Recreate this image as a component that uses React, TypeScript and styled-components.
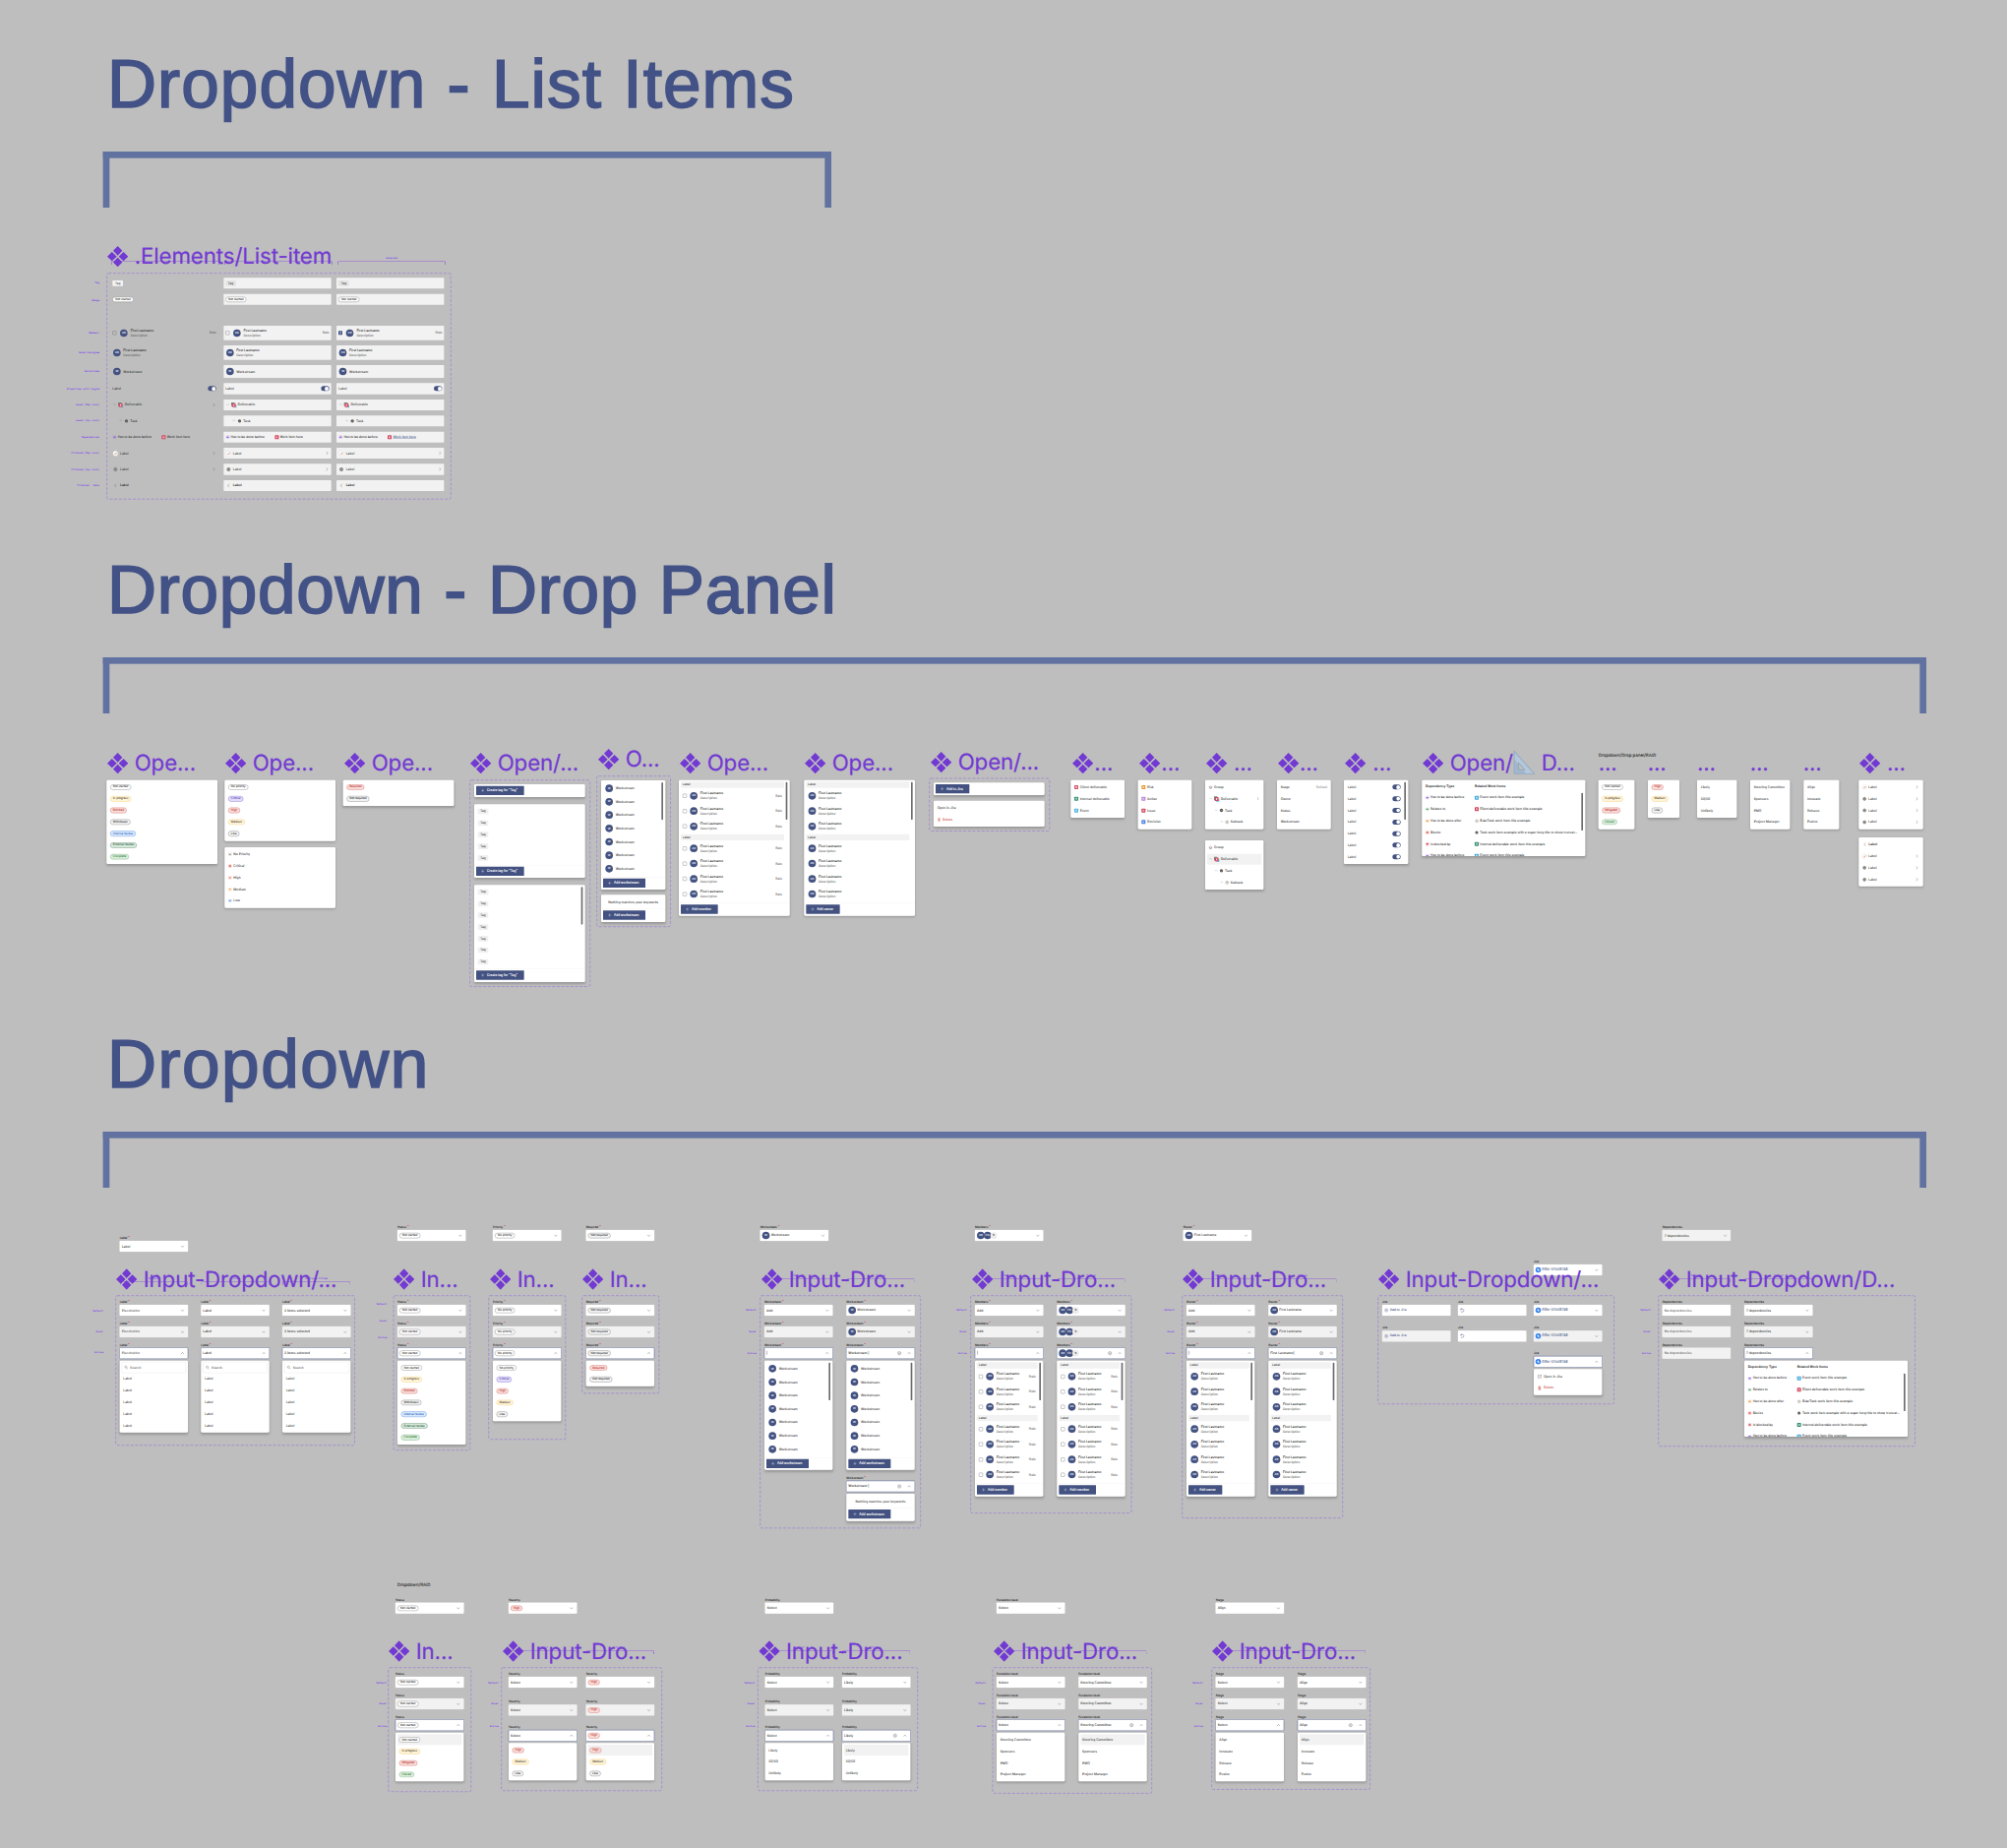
import React from "react";
import styled, { createGlobalStyle, css } from "styled-components";

/* The board is authored in canvas units and shown at one third zoom. */
const ZOOM = 1 / 3;

const color = {
  canvas: "#bebebe",
  heading: "#435286",
  bracket: "#6172a0",
  purple: "#7239d3",
  line: "#8f5fdc",
  dash: "rgba(142, 98, 226, 0.6)",
  navy: "#435281",
  text: "#343434",
  muted: "#606060",
  soft: "#f2f2f2",
  red: "#c83a32",
};

const Global = createGlobalStyle`
  html, body { margin: 0; background: ${color.canvas}; }
  body { overflow: hidden; }
  * { box-sizing: border-box; }
`;

const Viewport = styled.main`
  width: 2040px;
  height: 1878px;
  overflow: hidden;
  background: ${color.canvas};
`;

const Canvas = styled.div`
  position: relative;
  width: 6120px;
  height: 5634px;
  transform: scale(${ZOOM});
  transform-origin: 0 0;
  font-family: Inter, "Liberation Sans", sans-serif;
  font-size: 10px;
  line-height: 1;
  color: ${color.text};
  white-space: nowrap;
  text-rendering: geometricPrecision;
  -webkit-text-stroke: 0.15px currentColor;
`;

const Node = styled.div<{ $x: number; $y: number; $w?: number; $h?: number }>`
  position: absolute;
  left: ${(p) => p.$x}px;
  top: ${(p) => p.$y}px;
  ${(p) => p.$w !== undefined && `width: ${p.$w}px;`}
  ${(p) => p.$h !== undefined && `height: ${p.$h}px;`}
`;

/* ---------- headings ---------- */

const Heading = styled.h1<{ $track: number; $word: number }>`
  margin: 0;
  font-family: "Liberation Sans", Arial, sans-serif;
  font-weight: 400;
  font-size: 208px;
  line-height: 240px;
  letter-spacing: ${(p) => p.$track}px;
  word-spacing: ${(p) => p.$word}px;
  color: ${color.heading};
  -webkit-text-stroke: 5px ${color.heading};
`;

const BigBracket = styled.div`
  height: 171px;
  border: 20px solid ${color.bracket};
  border-bottom: 0;
`;

/* ---------- component titles ---------- */

const TitleRow = styled.div<{ $gap: number }>`
  display: flex;
  align-items: center;
  height: 80px;
  gap: ${(p) => p.$gap}px;
  color: ${color.purple};
`;

const TitleText = styled.span`
  display: flex;
  font-size: 67px;
  line-height: 80px;
  font-weight: 400;
  letter-spacing: -0.4px;
  white-space: pre;
  -webkit-text-stroke: 0.6px currentColor;
`;

const DiamondIcon = () => (
  <svg width="64" height="64" viewBox="0 0 64 64" fill="currentColor">
    <path d="M32 0 46 14.4 32 29 18 14.4zM32 35 46 49.6 32 64 18 49.6zM14.4 18 29 32 14.4 46 0 32zM49.6 18 64 32 49.6 46 35 32z" />
  </svg>
);

const RulerIcon = () => (
  <svg width="68" height="76" viewBox="0 0 68 76">
    <path d="M3 2v70h62z" fill="#a3b8cf" stroke="#8ba4c0" strokeWidth="2" />
    <path d="M5 8v20l34 43h22z" fill="#b9cbdd" opacity=".8" />
    <path d="M16 38v22h20z" fill="#bebebe" stroke="#8299b4" strokeWidth="2" />
  </svg>
);

function Title({ x, y, text, gap = 19, icon = true }: { x: number; y: number; text: React.ReactNode; gap?: number; icon?: boolean }) {
  return (
    <Node $x={x} $y={y - 40}>
      <TitleRow $gap={gap}>
        {icon && <DiamondIcon />}
        <TitleText>{text}</TitleText>
      </TitleRow>
    </Node>
  );
}

/* ---------- purple annotations ---------- */

const NoteText = styled.span`
  display: block;
  font-family: "Liberation Mono", monospace;
  font-size: 7.5px;
  line-height: 10px;
  text-align: right;
  color: #7c3cee;
`;

function SideNotes({ right, ys, names = ["Default", "Hover", "Active"] }: { right: number; ys: number[]; names?: string[] }) {
  return (
    <>
      {ys.map((y, i) => (
        <Node key={y} $x={right - 120} $y={y - 5} $w={120}>
          <NoteText>{names[i]}</NoteText>
        </Node>
      ))}
    </>
  );
}

const SpanLine = styled.div`
  height: 12px;
  border: 2.6px solid ${color.line};
  border-bottom: 0;
  border-radius: 4px 4px 0 0;
`;

const SpanNote = styled(NoteText)`
  height: 10px;
  text-align: center;
  margin-bottom: 3px;
`;

function Span({ x, y, w, name }: { x: number; y: number; w: number; name: string }) {
  return (
    <Node $x={x} $y={y - 13} $w={w}>
      <SpanNote>{name}</SpanNote>
      <SpanLine />
    </Node>
  );
}

const DashedFrame = styled(Node)<{ $pad: string; $gap?: number }>`
  display: flex;
  align-items: flex-start;
  gap: ${(p) => p.$gap ?? 0}px;
  padding: ${(p) => p.$pad};
`;

const Dash = styled.svg`
  position: absolute;
  inset: 0;
  width: 100%;
  height: 100%;
  overflow: visible;
  pointer-events: none;
`;

const DashOutline = () => (
  <Dash>
    <rect x="1" y="1" width="99.8%" height="99.8%" rx="5" fill="none" stroke={color.dash} strokeWidth="2.4" strokeDasharray="9 5" />
  </Dash>
);

const Stack = styled.div<{ $gap?: number }>`
  display: flex;
  flex-direction: column;
  gap: ${(p) => p.$gap ?? 0}px;
`;

/* ---------- icons ---------- */

type IconName =
  | "chevDown" | "chevUp" | "chevRight" | "chevLeft" | "plus" | "search" | "clear" | "trash"
  | "branch" | "stack" | "task" | "subtask" | "group" | "globe" | "brand" | "jira" | "add" | "loader" | "external";

const iconPaths: Record<IconName, React.ReactNode> = {
  chevDown: <path d="M2.5 5l4.5 5 4.5-5" />,
  chevUp: <path d="M2.5 9.5l4.5-5 4.5 5" />,
  chevRight: <path d="M5 2l4 5-4 5" />,
  chevLeft: <path d="M9 2L5 7l4 5" />,
  plus: <path d="M7 1.5v11M1.5 7h11" />,
  search: <><circle cx="5.5" cy="5.5" r="3.8" /><path d="M8.5 8.5L13 13" /></>,
  clear: <><circle cx="7" cy="7" r="5.2" /><path d="M5 5l4 4M9 5L5 9" /></>,
  trash: <path d="M3 3.5h8M5.5 3V1.5h3V3M4 4v9h6V4M6 6v5M8 6v5" />,
  branch: <path d="M3 5.5h6.5c2 0 2 3 2 3" opacity=".6" />,
  stack: (
    <g stroke="none">
      <path d="M0 0h9v3H3v7H0z" fill="#4d9c86" />
      <path d="M6 13h5V6h4v9H6z" fill="#6dbce0" />
      <path d="M2 2h10.5v11H2z" fill="#dc4460" />
      <path d="M5.5 5h3.5v5H5.500z" fill="#f7ccd3" />
    </g>
  ),
  task: <><circle cx="7" cy="7" r="5.4" fill="#505050" stroke="none" /><path d="M4.6 7.2l1.8 1.8 3.2-3.6" stroke="#e6e6e6" /></>,
  subtask: <><circle cx="7" cy="7" r="4.6" /><path d="M7 4v3.400h2.400" /></>,
  group: <path d="M1.500 7L7 4l5.500 3L7 10zM4 9v2.200h6V9" />,
  globe: <><circle cx="7" cy="7" r="5" fill="#b4b4b4" stroke="#5c5c5c" /><path d="M2 7h10M7 2v10" stroke="#5c5c5c" /></>,
  brand: <><circle cx="7" cy="7" r="7.600" fill="#fdfdfd" stroke="#cfcfcf" strokeWidth=".8" /><path d="M3 8.500l3 2 4.500-6" stroke="#e98c5a" strokeWidth="1.600" /><path d="M8 9l3-4" stroke="#8f4a3a" /></>,
  jira: <><circle cx="7" cy="7" r="7.600" fill="#2f7ff0" stroke="none" /><path d="M3 6.800L7 3v4.200zM7.200 7.200L11 7l-3.800 4z" fill="#fff" stroke="#fff" strokeWidth=".8" /></>,
  add: <><circle cx="7" cy="7" r="5.200" /><path d="M7 4.200v5.600M4.200 7h5.600" /></>,
  loader: <path d="M2 2.500h3.500M2.500 2v4M2.800 4.600A4.800 4.800 0 1 1 2.600 9.400" />,
  external: <path d="M7 2.500H2.500v9h9V7M8.500 2h4v4M12 2.500L7 7.500" />,
};

function Icon({ name, size = 14, tone = "#666", weight = 1.3 }: { name: IconName; size?: number; tone?: string; weight?: number }) {
  return (
    <svg width={size} height={size} viewBox="0 0 14 14" fill="none" stroke={tone} strokeWidth={weight} overflow="visible">
      {iconPaths[name]}
    </svg>
  );
}

const Square = styled.span<{ $c: string }>`
  display: flex;
  align-items: center;
  justify-content: center;
  flex: none;
  width: 12px;
  height: 12px;
  border-radius: 2px;
  background: ${(p) => p.$c};
  &::after {
    content: "";
    width: 45%;
    height: 50%;
    background: rgba(255, 255, 255, 0.55);
  }
`;

const Glyph = styled.span<{ $c: string }>`
  display: flex;
  align-items: center;
  justify-content: center;
  flex: none;
  width: 11px;
  height: 11px;
  border-radius: 2px;
  background: ${(p) => p.$c}2e;
  &::after {
    content: "";
    width: 7px;
    height: 4px;
    background: ${(p) => p.$c};
    opacity: 0.85;
  }
`;

/* ---------- atoms ---------- */

type Tone = "plain" | "amber" | "red" | "blue" | "green" | "teal" | "violet" | "grey";

const tones: Record<Tone, [string, string, string]> = {
  plain: ["#ffffff", "#686868", "#2c2c2c"],
  grey: ["#f3f3f3", "#686868", "#2c2c2c"],
  amber: ["#fff4d8", "#f2c65c", "#3f3828"],
  red: ["#f8dcd9", "#cb554c", "#b92c24"],
  blue: ["#d9e8fb", "#3b7edb", "#1f63c6"],
  green: ["#daeedb", "#5f9f64", "#2d7735"],
  teal: ["#d8e8dc", "#407553", "#265b3a"],
  violet: ["#e2dbf8", "#6f59ca", "#4f36b0"],
};

const PillBox = styled.span<{ $tone: Tone }>`
  display: inline-flex;
  align-items: center;
  height: 16.5px;
  padding: 0 7.5px;
  border-radius: 8.5px;
  border: 1.7px solid ${(p) => tones[p.$tone][1]};
  background: ${(p) => tones[p.$tone][0]};
  color: ${(p) => tones[p.$tone][2]};
  font-size: 8.8px;
`;

const badgeTone: Record<string, Tone> = {
  "Not started": "plain", "In progress": "amber", Blocked: "red", Withdrawn: "grey", "Internal review": "blue",
  "External review": "teal", Complete: "green", "No priority": "plain", Critical: "violet", High: "red",
  Medium: "amber", Low: "grey", Required: "red", "Not required": "grey", Mitigated: "red", Closed: "green",
};

const Pill = ({ name }: { name: string }) => <PillBox $tone={badgeTone[name]}>{name}</PillBox>;

const Chip = styled.span<{ $bg?: string }>`
  display: inline-flex;
  align-items: center;
  height: 17px;
  padding: 0 8px;
  border-radius: 2px;
  background: ${(p) => p.$bg ?? "#f0f0f0"};
  font-size: 9.2px;
`;

const Avatar = styled.span<{ $ghost?: boolean }>`
  display: inline-flex;
  align-items: center;
  justify-content: center;
  flex: none;
  width: 23px;
  height: 23px;
  border-radius: 50%;
  font-size: 8.6px;
  font-weight: 500;
  color: #e6e9f2;
  background: ${color.navy};
  ${(p) => p.$ghost && css`
    width: 20px;
    height: 20px;
    background: #ececec;
    color: ${color.text};
  `}
`;

const AvatarGroup = styled.span`
  display: flex;
  align-items: center;
  & > * + * { margin-left: -2.5px; }
`;

const Check = styled.span<{ $on?: boolean }>`
  flex: none;
  width: 12px;
  height: 12px;
  margin-right: 2px;
  border: 1.8px solid #5e5e5e;
  border-radius: 2px;
  ${(p) => p.$on && css`
    border: 3px solid ${color.navy};
    background: #8793b5;
  `}
`;

const ToggleTrack = styled.span`
  display: flex;
  justify-content: flex-end;
  align-items: center;
  margin-left: auto;
  width: 25px;
  height: 15px;
  padding: 1.6px;
  border-radius: 8px;
  background: ${color.navy};
  &::after {
    content: "";
    width: 11.6px;
    height: 11.6px;
    border-radius: 50%;
    background: #fff;
  }
`;

const Right = styled.span<{ $muted?: boolean }>`
  display: flex;
  margin-left: auto;
  color: ${(p) => (p.$muted ? "#8e8e8e" : color.muted)};
`;

const Txt = styled.span<{ $c?: string; $b?: boolean; $u?: boolean; $w?: number }>`
  color: ${(p) => p.$c ?? "inherit"};
  font-weight: ${(p) => (p.$b ? 600 : 400)};
  text-decoration: ${(p) => (p.$u ? "underline" : "none")};
  ${(p) => p.$w !== undefined && `width: ${p.$w}px;`}
`;

const Person = styled.span`
  display: flex;
  flex-direction: column;
  gap: 6px;
  & > :first-child { font-weight: 500; color: #2b2b2b; }
  & > :last-child { font-size: 9.6px; color: ${color.muted}; }
`;

const PersonText = () => (
  <Person>
    <span>First Lastname</span>
    <span>Description</span>
  </Person>
);

const Button = styled.button`
  display: inline-flex;
  align-items: center;
  gap: 7px;
  height: 28px;
  padding: 0 20px 0 14px;
  border: 0;
  border-radius: 1px;
  background: ${color.navy};
  color: #fff;
  font: 500 9.7px Inter, sans-serif;
  line-height: 1;
`;

const AddButton = ({ text }: { text: string }) => (
  <Button>
    <Icon name="plus" size={12} tone="#dfe3ee" />
    {text}
  </Button>
);

/* ---------- panels ---------- */

const PanelBox = styled.div<{ $w?: number; $h: number }>`
  position: relative;
  display: flex;
  flex-direction: column;
  overflow: hidden;
  padding-top: 4.2px;
  width: ${(p) => p.$w ?? 208}px;
  height: ${(p) => p.$h}px;
  border-radius: 4px;
  background: #fff;
`;

const Shadow = styled.div`
  width: fit-content;
  border-radius: 4px;
  box-shadow: 0 4px 8px rgba(0, 0, 0, 0.2);
`;

const Scroll = styled.i<{ $top?: number }>`
  position: absolute;
  top: ${(p) => p.$top ?? 6}px;
  right: 7px;
  width: 5px;
  height: 115px;
  border-radius: 3px;
  background: #6c6c6c;
`;

function Panel({ w, h, scroll, scrollTop, children }: { w?: number; h: number; scroll?: boolean; scrollTop?: number; children: React.ReactNode }) {
  return (
    <Shadow>
      <PanelBox $w={w} $h={h}>
        {children}
        {scroll && <Scroll $top={scrollTop} />}
      </PanelBox>
    </Shadow>
  );
}

const Row = styled.div<{ $h?: number; $indent?: number; $gap?: number; $right?: number; $hot?: boolean }>`
  display: flex;
  align-items: center;
  flex: none;
  height: ${(p) => p.$h ?? 35.4}px;
  gap: ${(p) => p.$gap ?? 4}px;
  padding-left: ${(p) => p.$indent ?? 11}px;
  padding-right: ${(p) => p.$right ?? 11}px;
  ${(p) => p.$hot && css`
    background: linear-gradient(${color.soft}, ${color.soft}) 6px 1px / calc(100% - 12px) 33px no-repeat;
  `}
`;

const Footer = styled.div<{ $mt?: number }>`
  display: flex;
  margin-top: ${(p) => p.$mt ?? 4}px;
  padding: 4px 6px;
  border-top: 1.5px solid #efefef;
`;

const GroupLabel = styled.div`
  display: flex;
  align-items: center;
  flex: none;
  height: 19px;
  margin: 1px 17px 1px 6px;
  padding-left: 5px;
  border-radius: 2px;
  background: ${color.soft};
  font-size: 9.4px;
`;

const MessageRow = styled(Row)`
  justify-content: center;
`;

const pills = (names: string[], hot = -1) =>
  names.map((n, i) => (
    <Row key={n} $hot={i === hot}>
      <Pill name={n} />
    </Row>
  ));

const texts = (names: string[], hot = -1) =>
  names.map((n, i) => (
    <Row key={n + i} $hot={i === hot}>
      <span>{n}</span>
    </Row>
  ));

const times = (n: number, render: (i: number) => React.ReactNode) =>
  Array.from({ length: n }, (_, i) => <React.Fragment key={i}>{render(i)}</React.Fragment>);

const tagRows = (n: number) => times(n, () => <Row><Chip>Tag</Chip></Row>);

const WorkstreamPanel = ({ w }: { w?: number }) => (
  <Panel w={w} h={333} scroll>
    {times(7, () => (
      <Row $h={40.9} $indent={13} $gap={8}>
        <Avatar>W</Avatar>
        <span>Workstream</span>
      </Row>
    ))}
    <Footer><AddButton text="Add workstream" /></Footer>
  </Panel>
);

const EmptyPanel = ({ w }: { w?: number }) => (
  <Panel w={w} h={83}>
    <MessageRow $h={39.5}>Nothing matches your keywords</MessageRow>
    <Footer $mt={0}><AddButton text="Add workstream" /></Footer>
  </Panel>
);

function PeoplePanel({ w, select, action }: { w?: number; select?: boolean; action: string }) {
  const person = () => (
    <Row $h={46.4} $indent={select ? 12 : 13} $gap={8} $right={23}>
      {select && <Check />}
      <Avatar>AB</Avatar>
      <PersonText />
      {select && <Right>Role</Right>}
    </Row>
  );
  return (
    <Panel w={w} h={414} scroll>
      <GroupLabel>Label</GroupLabel>
      {times(3, person)}
      <GroupLabel>Label</GroupLabel>
      {times(4, person)}
      <Footer><AddButton text={action} /></Footer>
    </Panel>
  );
}

const dependencyRows: [string, string, React.ReactNode, string][] = [
  ["#8b5ce0", "Has to be done before", <Square $c="#3fa9e0" />, "Event work item title example"],
  ["#4f9e63", "Relates to", <Square $c="#cf3f59" />, "Client deliverable work item title example"],
  ["#e39a3b", "Has to be done after", <Icon name="subtask" size={12} />, "Sub-Task work item title example"],
  ["#dc3b30", "Blocks", <Icon name="task" size={12} />, "Task work item example with a super long title to show truncat..."],
  ["#cf2b3e", "Is blocked by", <Square $c="#2f8e71" />, "Internal deliverable work item title example"],
  ["#8b5ce0", "Has to be done before", <Square $c="#3fa9e0" />, "Event work item title example"],
];

const DependencyCell = styled.span<{ $w?: number }>`
  display: flex;
  align-items: center;
  gap: 4px;
  font-size: 9.8px;
  ${(p) => p.$w !== undefined && `width: ${p.$w}px;`}
`;

const DependencyPanel = () => (
  <Panel w={498} h={232} scroll scrollTop={39}>
    <Row $h={32} $gap={0}>
      <Txt $b $w={150} $c="#1f1f1f">Dependency Type</Txt>
      <Txt $b $c="#1f1f1f">Related Work Items</Txt>
    </Row>
    {dependencyRows.map(([c, type, icon, title], i) => (
      <Row key={i} $gap={0}>
        <DependencyCell $w={150}><Glyph $c={c} />{type}</DependencyCell>
        <DependencyCell>{icon}{title}</DependencyCell>
      </Row>
    ))}
  </Panel>
);

const workRow = (c: string, name: string) => (
  <Row key={name} $gap={5}>
    <Square $c={c} />
    <span>{name}</span>
  </Row>
);

const HierarchyPanel = ({ hot }: { hot?: boolean }) => (
  <Panel w={178} h={150}>
    <Row $indent={10}><Icon name="group" size={13} /><span>Group</span></Row>
    <Row $indent={10} $gap={5} $hot={hot}>
      <Icon name="branch" size={12} />
      <Icon name="stack" size={15} />
      <span>Deliverable</span>
      {!hot && <Right><Icon name="chevRight" size={12} /></Right>}
    </Row>
    <Row $indent={27}><Icon name="branch" size={12} /><Icon name="task" size={13} /><span>Task</span></Row>
    <Row $indent={44}><Icon name="branch" size={12} /><Icon name="subtask" size={13} /><span>Subtask</span></Row>
  </Panel>
);

const menuRow = (icon: IconName) => (
  <Row $gap={5} $right={12}>
    <Icon name={icon} size={13} />
    <span>Label</span>
    <Right><Icon name="chevRight" size={13} /></Right>
  </Row>
);

const SearchBox = styled.div`
  display: flex;
  align-items: center;
  flex: none;
  gap: 6px;
  height: 34px;
  margin: 0 6px;
  padding-left: 7px;
  border: 1.5px solid #dedede;
  border-radius: 2px;
  color: ${color.muted};
`;

const SearchPanel = () => (
  <Panel h={219}>
    <SearchBox><Icon name="search" size={12} />Search</SearchBox>
    {texts(["Label", "Label", "Label", "Label", "Label"])}
  </Panel>
);

/* ---------- input fields ---------- */

type State = "default" | "hover" | "active";

const FieldBox = styled.div<{ $mt?: number }>`
  display: flex;
  flex-direction: column;
  width: 208px;
  margin-top: ${(p) => p.$mt ?? 0}px;
`;

const FieldLabel = styled.div`
  display: flex;
  gap: 3px;
  height: 16.4px;
  align-items: center;
  font-size: 8.8px;
  font-weight: 500;
  color: #2c2c2c;
`;

const Star = styled.sup`
  align-self: flex-start;
  font-size: 9px;
  line-height: 11px;
  color: #d8352c;
`;

const Control = styled.div<{ $state: State }>`
  display: flex;
  align-items: center;
  gap: 4px;
  height: 33px;
  padding: 0 10px 0 6px;
  border-radius: 2px;
  background: ${(p) => (p.$state === "hover" ? color.soft : "#fff")};
  box-shadow: ${(p) => (p.$state === "active" ? "inset 0 0 0 1px #7f88a9, 0 0 0 1.5px #7f88a9" : "0 0 0 1px rgba(225,225,225,.7)")};
`;

const ControlEnd = styled.span`
  display: flex;
  gap: 17px;
  margin-left: auto;
`;

const Drop = styled.div`
  margin-top: 6px;
`;

interface FieldProps {
  label: string;
  star?: boolean;
  value: React.ReactNode;
  state?: State;
  arrow?: boolean;
  clear?: boolean;
  mt?: number;
  panel?: React.ReactNode;
}

function Field({ label, star, value, state = "default", arrow = true, clear, mt, panel }: FieldProps) {
  return (
    <FieldBox $mt={mt}>
      <FieldLabel>
        {label}
        {star && <Star>*</Star>}
      </FieldLabel>
      <Control $state={state}>
        {value}
        <ControlEnd>
          {clear && <Icon name="clear" size={13} />}
          {arrow && <Icon name={state === "active" ? "chevUp" : "chevDown"} size={13} />}
        </ControlEnd>
      </Control>
      {panel && <Drop>{panel}</Drop>}
    </FieldBox>
  );
}

interface ColumnSpec {
  values: React.ReactNode[];
  panel?: React.ReactNode;
  clear?: boolean;
  extra?: React.ReactNode;
  arrows?: boolean;
  states?: State[];
}

interface SetProps {
  x: number;
  y?: number;
  w: number;
  h: number;
  title: string;
  dx?: number;
  pad?: number;
  gap?: number;
  gaps?: number[];
  label: string;
  star?: boolean;
  cols: ColumnSpec[];
  notes?: number;
  noteYs?: number[];
  spans?: string[];
  spanY?: number;
}

const STATES: State[] = ["default", "hover", "active"];

function ComponentSet(p: SetProps) {
  const { x, y = 244, pad = 13, gap = 42, gaps = [16, 16], dx = 2 } = p;
  return (
    <>
      {p.spans?.map((name, i) => (
        <Span key={i} x={x + pad + i * (208 + gap)} y={p.spanY ?? y - 51} w={208} name={name} />
      ))}
      <DashedFrame $x={x} $y={y} $w={p.w} $h={p.h} $pad={`13px ${pad}px`} $gap={gap}>
        <DashOutline />
        {p.cols.map((c, i) => (
          <Stack key={i}>
            {c.values.map((v, j) => {
              const state = c.states ? c.states[j] : STATES[j];
              return (
                <Field
                  key={j}
                  label={p.label}
                  star={p.star}
                  value={v}
                  state={state}
                  mt={j ? gaps[j - 1] : 0}
                  arrow={c.arrows ?? true}
                  clear={c.clear && j === 2}
                  panel={j === 2 ? c.panel : undefined}
                />
              );
            })}
            {c.extra}
          </Stack>
        ))}
      </DashedFrame>
      <Title x={x + dx} y={y - 49} text={p.title} />
      {p.notes !== undefined && <SideNotes right={p.notes} ys={p.noteYs ?? [y + 47, y + 112, y + 178]} />}
    </>
  );
}

const ghost = (t: string) => <Txt $c="#5e5e5e">{t}</Txt>;
const plain = (t: string) => <Txt $c="#262626">{t}</Txt>;
const three = (v: React.ReactNode) => [v, v, v];

const AvatarValue = ({ name, initials = "W" }: { name: string; initials?: string }) => (
  <DependencyCell>
    <Avatar>{initials}</Avatar>
    {name}
  </DependencyCell>
);

const MembersValue = () => (
  <AvatarGroup>
    <Avatar>AB</Avatar>
    <Avatar>CD</Avatar>
    <Avatar $ghost>5</Avatar>
  </AvatarGroup>
);

const JiraValue = () => (
  <DependencyCell>
    <Icon name="jira" size={15} />
    <Txt $c={color.navy}>CON-123456789</Txt>
  </DependencyCell>
);

const AddJira = () => (
  <DependencyCell>
    <Icon name="add" size={13} tone="#6473a0" />
    <Txt $c={color.navy}>Add to Jira</Txt>
  </DependencyCell>
);

const caret = plain("|");

/* ---------- list item table ---------- */

const Item = styled.div<{ $h?: number; $bg: boolean; $mb?: number; $gap?: number; $indent?: number }>`
  display: flex;
  align-items: center;
  width: 328px;
  height: ${(p) => p.$h ?? 33.2}px;
  margin-bottom: ${(p) => p.$mb ?? 16}px;
  padding: 0 6px;
  padding-left: ${(p) => p.$indent ?? 6}px;
  gap: ${(p) => p.$gap ?? 5}px;
  border-radius: 2px;
  background: ${(p) => (p.$bg ? color.soft : "transparent")};
`;

function ListItems({ variant }: { variant: 0 | 1 | 2 }) {
  const bg = variant > 0;
  const sel = variant === 2;
  return (
    <Stack>
      <Item $bg={bg}><Chip $bg={bg ? "#e3e3e3" : "#f4f4f4"}>Tag</Chip></Item>
      <Item $bg={bg} $mb={64}><Pill name="Not started" /></Item>
      <Item $bg={bg} $h={44} $gap={9}>
        <Check $on={sel} /><Avatar>AB</Avatar><PersonText /><Right>Role</Right>
      </Item>
      <Item $bg={bg} $h={44} $indent={8} $gap={8}><Avatar>AB</Avatar><PersonText /></Item>
      <Item $bg={bg} $h={39} $indent={8} $gap={8}><Avatar>W</Avatar><span>Workstream</span></Item>
      <Item $bg={bg}><span>Label</span><ToggleTrack /></Item>
      <Item $bg={bg} $gap={5}>
        <Icon name="branch" size={12} />
        <Icon name="stack" size={15} />
        <span>Deliverable</span>
        {!bg && <Right><Icon name="chevRight" size={13} /></Right>}
      </Item>
      <Item $bg={bg} $indent={25}><Icon name="branch" size={12} /><Icon name="task" size={13} /><span>Task</span></Item>
      <Item $bg={bg} $indent={7}>
        <DependencyCell $w={144}><Glyph $c="#8b5ce0" />Has to be done before</DependencyCell>
        <DependencyCell>
          <Square $c="#d3435e" />
          <Txt $u={sel} $c={sel ? "#43598f" : undefined}>Work item here</Txt>
        </DependencyCell>
      </Item>
      <Item $bg={bg} $indent={8} $gap={7}><Icon name="brand" size={14} /><span>Label</span><Right><Icon name="chevRight" size={13} /></Right></Item>
      <Item $bg={bg} $indent={8} $gap={7}><Icon name="globe" size={14} /><span>Label</span><Right><Icon name="chevRight" size={13} /></Right></Item>
      <Item $bg={bg} $indent={8} $gap={7} $mb={0}><Icon name="chevLeft" size={14} /><Txt $b>Label</Txt></Item>
    </Stack>
  );
}

const SmallHeading = styled.span`
  font-size: 13.4px;
  color: #303030;
  -webkit-text-stroke: 0.25px #303030;
`;

const statusAll = ["Not started", "In progress", "Blocked", "Withdrawn", "Internal review", "External review", "Complete"];
const priorities = ["No priority", "Critical", "High", "Medium", "Low"];
const raidStatus = ["Not started", "In progress", "Mitigated", "Closed"];
const levels = ["Steering Committee", "Sponsors", "PMO", "Project Manager"];
const stages = ["Align", "Innovate", "Release", "Evolve"];
const odds = ["Likely", "50/50", "Unlikely"];

interface HeadProps {
  y: number;
  bracketY: number;
  width: number;
  text: string;
  track?: number;
  word?: number;
}

function SectionHead({ y, bracketY, width, text, track = 3.6, word = 0 }: HeadProps) {
  return (
    <>
      <Node $x={327} $y={y}><Heading $track={track} $word={word}>{text}</Heading></Node>
      <Node $x={314} $y={bracketY} $w={width}><BigBracket /></Node>
    </>
  );
}

function ListItemBoard() {
  const notes = ["Tag", "Badge", "Members", "Owner/Assignee", "Workstream", "Properties with toggle", "Level (Map icon)", "Level (1px icon)", "Dependencies", "Filtered (Map icon)", "Filtered (1px icon)", "Filtered - Back"];
  return (
    <Node $x={150} $y={705}>
      <Span x={189} y={91} w={330} name="" />
      <Span x={534} y={91} w={330} name="" />
      <Span x={879} y={91} w={330} name="Selected" />
      <Title x={177} y={77} text=".Elements/List-item" />
      <DashedFrame $x={175} $y={127} $w={1051} $h={690} $pad="15px 12px" $gap={16.6}>
        <DashOutline />
        <ListItems variant={0} />
        <ListItems variant={1} />
        <ListItems variant={2} />
      </DashedFrame>
      <SideNotes right={153} ys={[159, 211, 312, 372, 429, 481, 529, 579, 628, 677, 727, 775]} names={notes} />
    </Node>
  );
}

function DropPanelBoard() {
  return (
    <>
      <Node $x={270} $y={2235}>
        <Title x={57} y={92} text="Ope..." />
        <Node $x={55} $y={143}><Panel w={338} h={256}>{pills(statusAll)}</Panel></Node>
        <Title x={417} y={92} text="Ope..." />
        <Node $x={415} $y={143}>
          <Stack $gap={19}>
            <Panel w={338} h={186}>{pills(priorities)}</Panel>
            <Panel w={338} h={185}>
              {([["#9a9a9a", "No Priority"], ["#e23b2e", "Critical"], ["#ee7c60", "High"], ["#f0ad4e", "Medium"], ["#4c9df0", "Low"]] as const).map(([c, n]) => (
                <Row key={n} $gap={5}><Glyph $c={c} /><span>{n}</span></Row>
              ))}
            </Panel>
          </Stack>
        </Node>
        <Title x={780} y={92} text="Ope..." />
        <Node $x={776} $y={143}><Panel w={338} h={79}>{pills(["Required", "Not required"])}</Panel></Node>
      </Node>

      <Node $x={1395} $y={2235}>
        <Title x={39} y={92} text="Open/..." />
        <DashedFrame $x={37} $y={142} $w={367} $h={631} $pad="14px">
          <DashOutline />
          <Stack $gap={22}>
            <Panel w={338} h={39}><Row $h={30} $indent={6}><AddButton text={'Create tag for "Tag"'} /></Row></Panel>
            <Panel w={338} h={224}>{tagRows(5)}<Footer><AddButton text={'Create tag for "Tag"'} /></Footer></Panel>
            <Panel w={338} h={296} scroll>{tagRows(7)}<Footer><AddButton text={'Create tag for "Tag"'} /></Footer></Panel>
          </Stack>
        </DashedFrame>
        <Title x={429} y={80} text="O..." />
        <DashedFrame $x={424} $y={130} $w={225} $h={460} $pad="13.5px 14px">
          <DashOutline />
          <Stack $gap={16}>
            <WorkstreamPanel w={196} />
            <EmptyPanel w={196} />
          </Stack>
        </DashedFrame>
        <Title x={678} y={92} text="Ope..." />
        <Node $x={675} $y={143}><PeoplePanel w={338} select action="Add member" /></Node>
        <Title x={1059} y={92} text="Ope..." />
        <Node $x={1057} $y={143}><PeoplePanel w={338} action="Add owner" /></Node>
      </Node>

      <Node $x={2790} $y={2235}>
        <Title x={48} y={89} text="Open/..." />
        <DashedFrame $x={43} $y={137} $w={367} $h={161} $pad="14px">
          <DashOutline />
          <Stack $gap={17}>
            <Panel w={338} h={38}><Row $h={29} $indent={6}><AddButton text="Add to Jira" /></Row></Panel>
            <Panel w={338} h={79}>
              <Row>Open in Jira</Row>
              <Row $gap={5}><Icon name="trash" size={11} tone={color.red} /><Txt $c={color.red}>Delete</Txt></Row>
            </Panel>
          </Stack>
        </DashedFrame>
        <Title x={480} y={92} gap={3} text="..." />
        <Node $x={475} $y={143}>
          <Panel w={164} h={115}>{workRow("#d3506a", "Client deliverable")}{workRow("#2f9076", "Internal deliverable")}{workRow("#4bb0e2", "Event")}</Panel>
        </Node>
        <Title x={684} y={92} gap={3} text="..." />
        <Node $x={680} $y={143}>
          <Panel w={164} h={150}>{workRow("#e6972f", "Risk")}{workRow("#b283d4", "Action")}{workRow("#cf4059", "Issue")}{workRow("#3f78e6", "Decision")}</Panel>
        </Node>
        <Title x={888} y={92} gap={20} text="..." />
        <Node $x={885} $y={143}><Stack $gap={34}><HierarchyPanel /><HierarchyPanel hot /></Stack></Node>
        <Title x={1107} y={92} gap={2} text="..." />
        <Node $x={1104} $y={143}>
          <Panel w={164} h={150}>
            <Row>Stage<Right $muted>Default</Right></Row>
            {texts(["Owner", "Status", "Workstream"])}
          </Panel>
        </Node>
        <Title x={1311} y={92} gap={21} text="..." />
        <Node $x={1308} $y={143}>
          <Panel w={196} h={256} scroll>{times(7, () => <Row $right={23}>Label<ToggleTrack /></Row>)}</Panel>
        </Node>
      </Node>

      <Node $x={4050} $y={2235}>
        <Title x={288} y={92} gap={19} text={<>Open/<RulerIcon /> D...</>} />
        <Node $x={286} $y={143}><DependencyPanel /></Node>
        <Node $x={824} $y={62}><SmallHeading>Dropdown/Drop panel/RAID</SmallHeading></Node>
        {[824, 974, 1125, 1286, 1448].map((x) => <Title key={x} x={x} y={92} icon={false} text="..." />)}
        <Node $x={824} $y={143}><Panel w={110} h={150}>{pills(raidStatus)}</Panel></Node>
        <Node $x={975} $y={143}><Panel w={96} h={115}>{pills(["High", "Medium", "Low"])}</Panel></Node>
        <Node $x={1125} $y={143}><Panel w={121} h={115}>{texts(odds)}</Panel></Node>
        <Node $x={1287} $y={143}><Panel w={121} h={150}>{texts(levels)}</Panel></Node>
        <Node $x={1450} $y={143}><Panel w={108} h={150}>{texts(stages)}</Panel></Node>
        <Title x={1620} y={92} gap={20} text="..." />
        <Node $x={1618} $y={143}>
          <Stack $gap={25}>
            <Panel w={196} h={150}>{menuRow("brand")}{menuRow("globe")}{menuRow("globe")}{menuRow("globe")}</Panel>
            <Panel w={196} h={149}>
              <Row $indent={12} $gap={5}><Icon name="chevLeft" size={13} /><Txt $b>Label</Txt></Row>
              {menuRow("brand")}{menuRow("globe")}{menuRow("globe")}
            </Panel>
          </Stack>
        </Node>
      </Node>
    </>
  );
}

function InputBoard() {
  const pv = <Pill name="No priority" />;
  const sv = <Pill name="Not started" />;
  const rv = <Pill name="Not required" />;
  const wv = <AvatarValue name="Workstream" />;
  const ov = <AvatarValue name="First Lastname" initials="AB" />;
  return (
    <>
      <Node $x={240} $y={3705}>
        <Node $x={125} $y={62}><Field label="Label" star value={plain("Label")} /></Node>
        <ComponentSet
          x={112} w={730} h={457} title="Input-Dropdown/..." gap={40} label="Label" star
          spans={["Default", "Filled", "Multiple filled"]} spanY={202} notes={75} noteYs={[293, 356, 419]}
          cols={[
            { values: three(ghost("Placeholder")), panel: <SearchPanel /> },
            { values: three(plain("Label")), panel: <SearchPanel /> },
            { values: three(plain("2 items selected")), panel: <SearchPanel /> },
          ]}
        />
        <Node $x={972} $y={29}><Field label="Status" star value={sv} /></Node>
        <ComponentSet
          x={959} w={234} h={472} title="In..." dx={1} label="Status" star notes={940} noteYs={[273, 324, 373]}
          cols={[{ values: three(sv), panel: <Panel h={256}>{pills(statusAll)}</Panel> }]}
        />
      </Node>

      <Node $x={1440} $y={3705}>
        <Node $x={63} $y={29}><Field label="Priority" star value={pv} /></Node>
        <ComponentSet
          x={49} w={235} h={439} title="In..." dx={5} pad={14} label="Priority" star
          cols={[{ values: three(pv), panel: <Panel h={185}>{pills(priorities)}</Panel> }]}
        />
        <Node $x={347} $y={29}><Field label="Required" star value={rv} /></Node>
        <ComponentSet
          x={334} w={235} h={298} title="In..." label="Required" star
          cols={[{ values: three(rv), panel: <Panel h={78}>{pills(["Required", "Not required"])}</Panel> }]}
        />
      </Node>

      <Node $x={2250} $y={3705}>
        <Node $x={68} $y={29}><Field label="Workstream" star value={wv} /></Node>
        <ComponentSet
          x={67} w={490} h={710} title="Input-Dro..." dx={5} pad={14} label="Workstream" star notes={56} spans={["Default", "Filled"]}
          cols={[
            { values: [plain("Add"), plain("Add"), caret], panel: <WorkstreamPanel /> },
            {
              values: [wv, wv, plain("Workstream |")], clear: true, panel: <WorkstreamPanel />,
              extra: <Field label="Workstream" star value={plain("Workstream |")} state="active" clear mt={17} panel={<EmptyPanel />} />,
            },
          ]}
        />
        <Node $x={723} $y={29}><Field label="Members" star value={<MembersValue />} /></Node>
        <ComponentSet
          x={709} w={491} h={664} title="Input-Dro..." dx={5} pad={14} label="Members" star notes={698} spans={["Default", "Filled"]}
          cols={[
            { values: [plain("Add"), plain("Add"), caret], panel: <PeoplePanel select action="Add member" /> },
            { values: three(<MembersValue />), clear: true, panel: <PeoplePanel select action="Add member" /> },
          ]}
        />
      </Node>

      <Node $x={3540} $y={3705}>
        <Node $x={68} $y={29}><Field label="Owner" star value={ov} /></Node>
        <ComponentSet
          x={64} w={490} h={679} title="Input-Dro..." pad={14} label="Owner" star notes={42} spans={["Default", "Filled"]}
          cols={[
            { values: [plain("Add"), plain("Add"), caret], panel: <PeoplePanel action="Add owner" /> },
            { values: [ov, ov, plain("First Lastname|")], clear: true, panel: <PeoplePanel action="Add owner" /> },
          ]}
        />
        <Node $x={1137} $y={134}><Field label="Jira" value={<JiraValue />} /></Node>
        <ComponentSet
          x={661} w={721} h={331} title="Input-Dropdown/..." pad={14} gap={23} gaps={[29, 29]} label="Jira"
          cols={[
            { values: [<AddJira />, <AddJira />], arrows: false },
            { values: [<Icon name="loader" tone={color.navy} />, <Icon name="loader" tone={color.navy} />], arrows: false, states: ["default", "default"] },
            {
              values: three(<JiraValue />),
              panel: (
                <Panel h={79}>
                  <Row $gap={6}><Icon name="external" size={13} /><span>Open in Jira</span></Row>
                  <Row $gap={6}><Icon name="trash" size={13} tone={color.red} /><Txt $c={color.red}>Delete</Txt></Row>
                </Panel>
              ),
            },
          ]}
        />
      </Node>

      <Node $x={4920} $y={3705}>
        <Node $x={149} $y={29}><Field label="Dependencies" state="hover" value={plain("7 dependencies")} /></Node>
        <ComponentSet
          x={136} w={784} h={460} title="Input-Dropdown/D..." label="Dependencies" notes={114} spans={["Default", "Filled"]}
          cols={[
            { values: three(ghost("No dependencies")), arrows: false, states: ["default", "hover", "hover"] },
            { values: three(plain("7 dependencies")), panel: <DependencyPanel /> },
          ]}
        />
      </Node>
    </>
  );
}

function RaidBoard() {
  const sv = <Pill name="Not started" />;
  const high = <Pill name="High" />;
  const severity = ["High", "Medium", "Low"];
  return (
    <>
      <Node $x={1110} $y={4785}>
        <Node $x={101} $y={41}><SmallHeading>Dropdown/RAID</SmallHeading></Node>
        <Node $x={96} $y={85}><Field label="Status" value={sv} /></Node>
        <ComponentSet
          x={73} y={298} w={253} h={379} title="In..." pad={23} label="Status" notes={69} noteYs={[347, 411, 478]}
          cols={[{ values: three(sv), panel: <Panel h={149}>{pills(raidStatus, 0)}</Panel> }]}
        />
        <Node $x={441} $y={85}><Field label="Severity" value={high} /></Node>
        <ComponentSet
          x={418} y={298} w={490} h={376} title="Input-Dro..." dx={5} pad={23} gap={28} gaps={[35.5, 28.5]} label="Severity"
          notes={410} noteYs={[347, 411, 478]} spans={["Default", "Filled"]}
          cols={[
            { values: three(plain("Select")), panel: <Panel h={114}>{pills(severity)}</Panel> },
            { values: three(high), panel: <Panel h={114}>{pills(severity, 0)}</Panel> },
          ]}
        />
        <Node $x={1223} $y={85}><Field label="Probability" value={plain("Select")} /></Node>
        <ComponentSet
          x={1200} y={298} w={488} h={376} title="Input-Dro..." dx={4} pad={23} gap={27} gaps={[35.5, 28.5]} label="Probability"
          notes={1192} noteYs={[347, 411, 478]} spans={["Default", "Filled"]}
          cols={[
            { values: three(plain("Select")), panel: <Panel h={114}>{texts(odds)}</Panel> },
            { values: three(plain("Likely")), clear: true, panel: <Panel h={114}>{texts(odds, 0)}</Panel> },
          ]}
        />
      </Node>

      <Node $x={2820} $y={4785}>
        <Node $x={219} $y={85}><Field label="Escalation level" value={plain("Select")} /></Node>
        <ComponentSet
          x={206} y={298} w={486} h={384} title="Input-Dro..." dx={4} label="Escalation level"
          notes={186} noteYs={[347, 411, 478]} spans={["Default", "Filled"]}
          cols={[
            { values: three(plain("Select")), panel: <Panel h={149}>{texts(levels)}</Panel> },
            { values: three(plain("Steering Committee")), clear: true, panel: <Panel h={149}>{texts(levels, 0)}</Panel> },
          ]}
        />
        <Node $x={887} $y={85}><Field label="Stage" value={plain("Align")} /></Node>
        <ComponentSet
          x={874} y={298} w={484} h={372} title="Input-Dro..." label="Stage"
          notes={848} noteYs={[347, 411, 478]} spans={["Default", "Filled"]}
          cols={[
            { values: three(plain("Select")), panel: <Panel h={149}>{texts(stages)}</Panel> },
            { values: three(plain("Align")), clear: true, panel: <Panel h={149}>{texts(stages, 0)}</Panel> },
          ]}
        />
      </Node>
    </>
  );
}

export default function App() {
  return (
    <Viewport>
      <Global />
      <Canvas>
        <SectionHead y={137} bracketY={462} width={2221} text="Dropdown - List Items" track={3.1} word={3} />
        <ListItemBoard />
        <SectionHead y={1678} bracketY={2004} width={5560} text="Dropdown - Drop Panel" track={2} word={3} />
        <DropPanelBoard />
        <SectionHead y={3124} bracketY={3450} width={5560} text="Dropdown" track={4.4} />
        <InputBoard />
        <RaidBoard />
      </Canvas>
    </Viewport>
  );
}
